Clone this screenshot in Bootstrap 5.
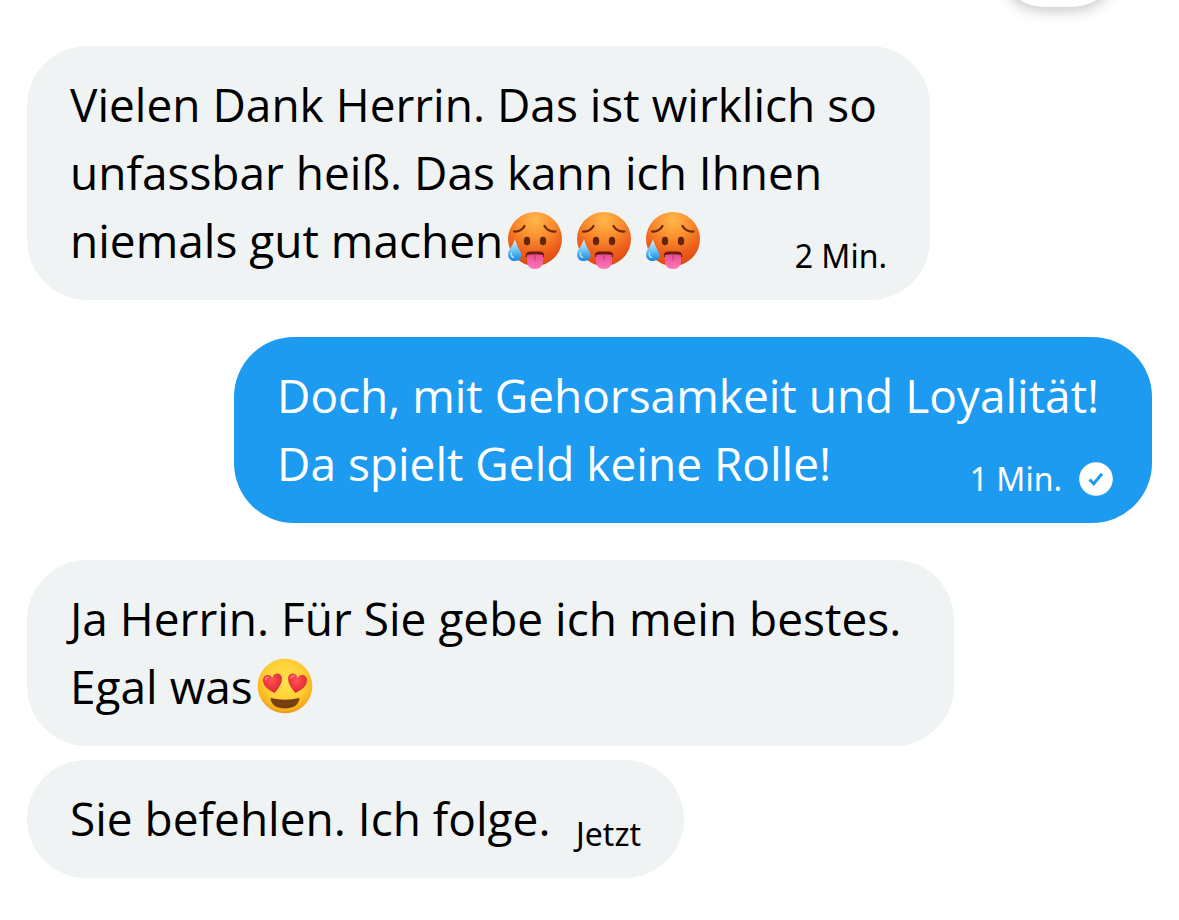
<!DOCTYPE html>
<html lang="de">
<head>
<meta charset="utf-8">
<meta name="viewport" content="width=device-width, initial-scale=1">
<title>Nachrichten</title>
<link href="https://cdn.jsdelivr.net/npm/bootstrap@5.3.0/dist/css/bootstrap.min.css" rel="stylesheet">
<style>
body{background:#fff;color:#000;font-family:"Open Sans","Noto Sans",sans-serif;overflow-x:hidden}
.chat{padding:46px 27px 40px}
.bubble{font-size:46px;line-height:68px;padding:24px 43px 26px;border-radius:60px;background:#eff3f4}
.bubble.own{background:#1d9bf0;color:#fff;padding-right:39px}
.w-a{width:903px;max-width:100%}
.w-b{width:918px;max-width:100%}
.w-c{width:927px;max-width:100%}
.w-d{width:657px;max-width:100%}
.gap-turn{margin-top:37px}
.gap-same{margin-top:14px}
.stamp{font-family:"Noto Sans",sans-serif;font-size:32px;line-height:36px}
.emoji{width:56px;height:58px}
.emojis{gap:13px;margin-left:4px}
.check{width:34px;height:34px;margin-left:17px}
.fab{top:-88px;right:64px;width:114px;height:95px;border-radius:42px;background:#fff;box-shadow:0 2px 16px rgba(0,0,0,.28)}
@media (min-width:1000px){.bubble{white-space:nowrap}}
</style>
<script src="https://cdn.jsdelivr.net/npm/bootstrap@5.3.0/dist/js/bootstrap.bundle.min.js"></script>
</head>
<body>
<svg width="0" height="0" class="position-absolute" aria-hidden="true">
<defs>
<radialGradient id="hotFace" cx=".5" cy=".15" r=".85"><stop offset="0" stop-color="#ffb84c"/><stop offset=".4" stop-color="#f98d2d"/><stop offset=".75" stop-color="#ec5c1a"/><stop offset="1" stop-color="#dc4a12"/></radialGradient>
<linearGradient id="drop" x2="0" y2="1"><stop offset="0" stop-color="#d8f3ff"/><stop offset=".5" stop-color="#6cc6f6"/><stop offset="1" stop-color="#1583dc"/></linearGradient>
<linearGradient id="tongue" x2="0" y2="1"><stop offset="0" stop-color="#e84c91"/><stop offset="1" stop-color="#ff78b9"/></linearGradient>
<radialGradient id="loveFace" cx=".5" cy=".4" r=".6"><stop offset="0" stop-color="#ffe34a"/><stop offset=".6" stop-color="#ffd036"/><stop offset=".88" stop-color="#f9b21f"/><stop offset="1" stop-color="#eb9718"/></radialGradient>
<radialGradient id="heart" cx=".45" cy=".35" r=".7"><stop offset="0" stop-color="#ff5353"/><stop offset="1" stop-color="#dc1f32"/></radialGradient>
<symbol id="hot" viewBox="0 0 56 58">
<circle cx="28" cy="28" r="27" fill="url(#hotFace)"/>
<path d="M7 20.500Q14 21 17.500 15M37.500 15Q41 21 48.500 20.500" fill="none" stroke="#6b2606" stroke-width="2.200" stroke-linecap="round"/>
<ellipse cx="20" cy="30" rx="3.200" ry="4.300" fill="#652307"/><ellipse cx="36" cy="30" rx="3.200" ry="4.300" fill="#652307"/>
<path d="M19 46q-1-5.500 5-5.500h8q6 0 5 5.500z" fill="#6b1b0b"/>
<path d="M20 44q8-1.500 16 0v5.500q0 8.500-8 8.500T20 49.500z" fill="url(#tongue)"/><path d="M28 43.500v6" stroke="#c83a80" stroke-width="1.200"/>
<path d="M8 28.500Q10 35 12.800 39.500C17 46 13 50 8 50S-1 46 2.200 39Q6 34 8 28.500z" fill="url(#drop)"/>
<path d="M4.500 42q-1 3 2 4.500" fill="none" stroke="#fff" stroke-opacity=".6" stroke-width="1.500" stroke-linecap="round"/>
</symbol>
<symbol id="love" viewBox="0 0 56 58">
<circle cx="28" cy="29" r="27.300" fill="url(#loveFace)"/>
<path d="M13.500 41Q28 44.500 42.500 41C42 48 36 51.500 28 51.500S14 48 13.500 41z" fill="#75400d"/>
<path d="M17.500 36Q7 31 6 24.500C5 18 12.500 15.500 15.500 21C16.500 15 24.500 15 25 21.500Q25 28 17.500 36z" fill="url(#heart)"/>
<path d="M38.500 36Q31 28 31 21.500C31.500 15 39.500 15 40.500 21C43.500 15.500 51 18 50 24.500Q49 31 38.500 36z" fill="url(#heart)"/>
<path d="M8.500 23q0-3 3-3M34 21q1-3 3.500-2" fill="none" stroke="#ff9b91" stroke-width="1.200" stroke-linecap="round"/>
</symbol>
</defs>
</svg>
<button type="button" class="fab position-absolute border-0" aria-label="Menü"></button>
<main class="chat d-flex flex-column align-items-start">
<article class="bubble w-a">
<div>Vielen Dank Herrin. Das ist wirklich so</div>
<div>unfassbar heiß. Das kann ich Ihnen</div>
<div class="d-flex justify-content-between align-items-end"><div class="d-flex align-items-center">niemals gut machen<span class="emojis d-flex"><svg class="emoji" role="img" aria-label="Heißes Gesicht"><use href="#hot"/></svg><svg class="emoji" role="img" aria-label="Heißes Gesicht"><use href="#hot"/></svg><svg class="emoji" role="img" aria-label="Heißes Gesicht"><use href="#hot"/></svg></span></div><time class="stamp">2 Min.</time></div>
</article>
<article class="bubble own w-b gap-turn align-self-end">
<div>Doch, mit Gehorsamkeit und Loyalität!</div>
<div class="d-flex justify-content-between align-items-end"><div>Da spielt Geld keine Rolle!</div><div class="stamp d-flex align-items-center"><time>1 Min.</time><svg class="check" viewBox="0 0 34 34" role="img" aria-label="Gesendet"><circle cx="17" cy="17" r="16.800" fill="#fff"/><path d="M10.500 17.500L14.700 21.700L23 11.700" fill="none" stroke="#1d9bf0" stroke-width="3"/></svg></div></div>
</article>
<article class="bubble w-c gap-turn">
<div>Ja Herrin. Für Sie gebe ich mein bestes.</div>
<div class="d-flex align-items-center">Egal was<span class="emojis d-flex"><svg class="emoji" role="img" aria-label="Gesicht mit Herzaugen"><use href="#love"/></svg></span></div>
</article>
<article class="bubble w-d gap-same">
<div class="d-flex justify-content-between align-items-end"><div>Sie befehlen. Ich folge.</div><time class="stamp">Jetzt</time></div>
</article>
</main>
</body>
</html>
